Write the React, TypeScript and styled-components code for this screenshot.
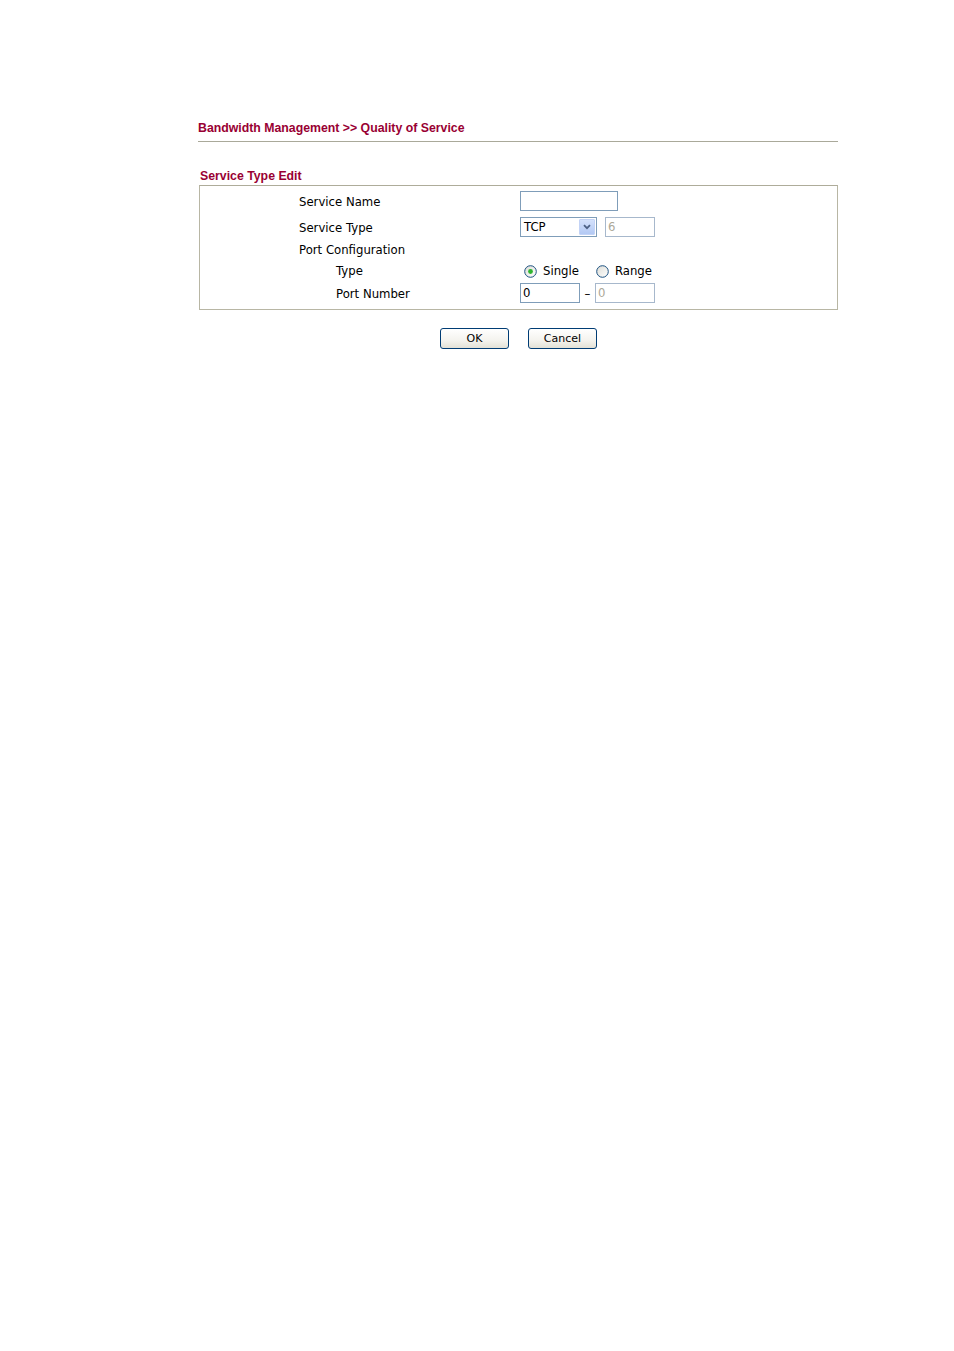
import React from "react";
import styled, { createGlobalStyle } from "styled-components";

const Global = createGlobalStyle`
  html, body { margin: 0; padding: 0; background: #fff; }
  body { font-family: "DejaVu Sans", Verdana, sans-serif; color: #000; }
`;

const Page = styled.div`
  width: 640px;
  margin-left: 198px;
  padding-top: 121px;
  min-height: 1230px;
`;

const Breadcrumb = styled.div`
  font-family: "Liberation Sans", Arial, sans-serif;
  font-weight: bold;
  font-size: 12.3px;
  line-height: 15px;
  color: #990033;
  padding-bottom: 5px;
  border-bottom: 1px solid #aaa99a;
`;

const SectionTitle = styled.div`
  font-family: "Liberation Sans", Arial, sans-serif;
  font-weight: bold;
  font-size: 12.3px;
  line-height: 15px;
  color: #990033;
  margin-top: 27px;
  padding-left: 2px;
  height: 16px;
`;

const Box = styled.div`
  margin-left: 1px;
  border: 1px solid #b8b6a4;
  border-top-color: #aeac9a;
  padding-bottom: 3px;
`;

const Row = styled.div<{ $h: number }>`
  display: grid;
  grid-template-columns: 320px 1fr;
  height: ${(p) => p.$h}px;
  align-items: center;
`;

const Label = styled.div<{ $indent?: boolean }>`
  padding-left: ${(p) => (p.$indent ? 136 : 99)}px;
  padding-top: 2px;
  font-size: 11.7px;
  line-height: 14px;
`;

const Field = styled.div<{ $shift?: number }>`
  display: flex;
  align-items: center;
  font-size: 11.7px;
  padding-left: ${(p) => p.$shift ?? 0}px;
`;

const TextBox = styled.div<{ $w: number; $disabled?: boolean }>`
  box-sizing: border-box;
  width: ${(p) => p.$w}px;
  height: 20px;
  border: 1px solid ${(p) => (p.$disabled ? "#a7b8cc" : "#7f9db9")};
  background: #fff;
  color: ${(p) => (p.$disabled ? "#aca899" : "#000")};
  font-size: 11.7px;
  line-height: 18px;
  padding-left: 2px;
`;

const Select = styled.div`
  box-sizing: border-box;
  width: 77px;
  height: 20px;
  border: 1px solid #7f9db9;
  display: flex;
  align-items: stretch;
  background: #fff;
`;

const SelectText = styled.div`
  flex: 1;
  padding-left: 3px;
  line-height: 18px;
  font-size: 11.7px;
`;

const SelectBtn = styled.div`
  width: 16px;
  margin: 1px;
  border-radius: 1px;
  background: linear-gradient(#d4e1fb, #b3c9f4);
  border: 1px solid #c3d3f6;
  box-sizing: border-box;
  display: flex;
  align-items: center;
  justify-content: center;
`;

const Radios = styled.div`
  display: flex;
  align-items: center;
  padding-left: 4px;
  padding-top: 2px;
`;

const Radio = styled.label<{ $gap: number }>`
  display: flex;
  align-items: center;
  margin-right: ${(p) => p.$gap}px;
  font-size: 11.7px;
  svg { margin-right: 6px; }
`;

const Dash = styled.span`
  width: 15px;
  text-align: center;
  font-size: 11.7px;
  line-height: 20px;
  padding-top: 2px;
`;

const Buttons = styled.div`
  display: flex;
  gap: 19px;
  margin-top: 18px;
  padding-left: 242px;
`;

const Button = styled.button`
  box-sizing: border-box;
  width: 69px;
  height: 21px;
  border: 1px solid #003c74;
  border-radius: 3px;
  background: linear-gradient(#ffffff, #f4f3ee 60%, #e3e1d6);
  font-family: "DejaVu Sans", Verdana, sans-serif;
  font-size: 11px;
  color: #000;
  padding: 0;
  line-height: 19px;
`;

const RadioIcon = ({ checked }: { checked?: boolean }) => (
  <svg width="13" height="13" viewBox="0 0 13 13">
    <defs>
      <linearGradient id={checked ? "rg1" : "rg2"} x1="0" y1="0" x2="1" y2="1">
        <stop offset="0" stopColor="#dcdcd6" />
        <stop offset="1" stopColor="#ffffff" />
      </linearGradient>
    </defs>
    <circle cx="6.5" cy="6.5" r="5.8" fill={`url(#${checked ? "rg1" : "rg2"})`} stroke="#1c5180" strokeWidth="1" />
    {checked && <circle cx="6.5" cy="6.5" r="2.4" fill="#2fb52f" />}
  </svg>
);

const Chevron = () => (
  <svg width="8" height="6" viewBox="0 0 8 6">
    <path d="M1 1.2 L4 4.2 L7 1.2" fill="none" stroke="#4d6185" strokeWidth="1.8" />
  </svg>
);

export default function App() {
  return (
    <>
      <Global />
      <Page>
        <Breadcrumb>Bandwidth Management &gt;&gt; Quality of Service</Breadcrumb>
        <SectionTitle>Service Type Edit</SectionTitle>
        <Box>
          <Row $h={29}>
            <Label>Service Name</Label>
            <Field>
              <TextBox $w={98} />
            </Field>
          </Row>
          <Row $h={23}>
            <Label>Service Type</Label>
            <Field>
              <Select>
                <SelectText>TCP</SelectText>
                <SelectBtn>
                  <Chevron />
                </SelectBtn>
              </Select>
              <Field $shift={8}>
                <TextBox $w={50} $disabled>6</TextBox>
              </Field>
            </Field>
          </Row>
          <Row $h={22}>
            <Label>Port Configuration</Label>
            <Field />
          </Row>
          <Row $h={20}>
            <Label $indent>Type</Label>
            <Radios>
              <Radio $gap={17}>
                <RadioIcon checked />
                Single
              </Radio>
              <Radio $gap={0}>
                <RadioIcon />
                Range
              </Radio>
            </Radios>
          </Row>
          <Row $h={26}>
            <Label $indent>Port Number</Label>
            <Field>
              <TextBox $w={60}>0</TextBox>
              <Dash>–</Dash>
              <TextBox $w={60} $disabled>0</TextBox>
            </Field>
          </Row>
        </Box>
        <Buttons>
          <Button>OK</Button>
          <Button>Cancel</Button>
        </Buttons>
      </Page>
    </>
  );
}
